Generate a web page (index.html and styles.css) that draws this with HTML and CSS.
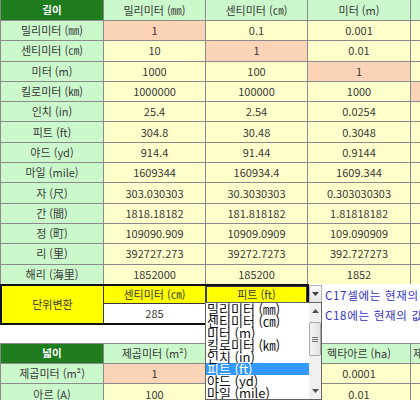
FILE: index.html
```html
<!DOCTYPE html>
<html lang="ko">
<head>
<meta charset="utf-8">
<title>단위변환</title>
<link rel="stylesheet" href="styles.css">
</head>
<body>
<div class="sheet">
  <div class="grid length">
    <div class="c h0">길이</div>
    <div class="c h k">밀리미터 (㎜)</div>
    <div class="c h k">센티미터 (㎝)</div>
    <div class="c h k">미터 (m)</div>
    <div class="c h k">킬로미터 (㎞)</div>

    <div class="c lb k">밀리미터 (㎜)</div><div class="c d">1</div><div class="c v">0.1</div><div class="c v">0.001</div><div class="c v">0.000001</div>
    <div class="c lb k">센티미터 (㎝)</div><div class="c v">10</div><div class="c d">1</div><div class="c v">0.01</div><div class="c v">0.00001</div>
    <div class="c lb k">미터 (m)</div><div class="c v">1000</div><div class="c v">100</div><div class="c d">1</div><div class="c v">0.001</div>
    <div class="c lb k">킬로미터 (㎞)</div><div class="c v">1000000</div><div class="c v">100000</div><div class="c v">1000</div><div class="c d">1</div>
    <div class="c lb k">인치 (in)</div><div class="c v">25.4</div><div class="c v">2.54</div><div class="c v">0.0254</div><div class="c v">0.0000254</div>
    <div class="c lb k">피트 (ft)</div><div class="c v">304.8</div><div class="c v">30.48</div><div class="c v">0.3048</div><div class="c v">0.0003048</div>
    <div class="c lb k">야드 (yd)</div><div class="c v">914.4</div><div class="c v">91.44</div><div class="c v">0.9144</div><div class="c v">0.0009144</div>
    <div class="c lb k">마일 (mile)</div><div class="c v">1609344</div><div class="c v">160934.4</div><div class="c v">1609.344</div><div class="c v">1.609344</div>
    <div class="c lb k">자 (尺)</div><div class="c v">303.030303</div><div class="c v">30.3030303</div><div class="c v">0.303030303</div><div class="c v">0.000303</div>
    <div class="c lb k">간 (間)</div><div class="c v">1818.18182</div><div class="c v">181.818182</div><div class="c v">1.81818182</div><div class="c v">0.001818</div>
    <div class="c lb k">정 (町)</div><div class="c v">109090.909</div><div class="c v">10909.0909</div><div class="c v">109.090909</div><div class="c v">0.109091</div>
    <div class="c lb k">리 (里)</div><div class="c v">392727.273</div><div class="c v">39272.7273</div><div class="c v">392.727273</div><div class="c v">0.392727</div>
    <div class="c lb k">해리 (海里)</div><div class="c v">1852000</div><div class="c v">185200</div><div class="c v">1852</div><div class="c v">1.852</div>
  </div>

  <div class="convert">
    <div class="conv">
      <div class="c yel k conv-label">단위변환</div>
      <div class="c yel k">센티미터 (㎝)</div>
      <div class="c yel k sel">피트 (ft)</div>
      <div class="c wht">285</div>
      <div class="c wht"></div>
    </div>
    <div class="notes">
      <p>C17셀에는 현재의 단위를 선택하세요</p>
      <p>C18에는 현재의 값을 입력하세요</p>
    </div>
  </div>

  <div class="grid area">
    <div class="c h0">넓이</div>
    <div class="c h k">제곱미터 (m²)</div>
    <div class="c h k">아르 (A)</div>
    <div class="c h k">헥타아르 (ha)</div>
    <div class="c h k">제곱킬로미터 (㎢)</div>

    <div class="c lb k">제곱미터 (m²)</div><div class="c d">1</div><div class="c v">0.01</div><div class="c v">0.0001</div><div class="c v">0.000001</div>
    <div class="c lb k">아르 (A)</div><div class="c v">100</div><div class="c d">1</div><div class="c v">0.01</div><div class="c v">0.0001</div>
  </div>

  <div class="dd-btn">
    <svg width="7" height="4" viewBox="0 0 7 4"><polygon points="0,0 7,0 3.5,4" fill="#404040"/></svg>
  </div>

  <div class="dd-list">
    <ul class="items">
      <li>밀리미터 (㎜)</li>
      <li>센티미터 (㎝)</li>
      <li>미터 (m)</li>
      <li>킬로미터 (㎞)</li>
      <li>인치 (in)</li>
      <li class="on">피트 (ft)</li>
      <li>야드 (yd)</li>
      <li>마일 (mile)</li>
    </ul>
    <div class="sbar">
      <div class="sb-btn"><svg width="7" height="4" viewBox="0 0 7 4"><polygon points="0,4 7,4 3.5,0" fill="#505050"/></svg></div>
      <div class="thumb"><svg width="6" height="5" viewBox="0 0 6 5"><path d="M0 0.5H6M0 2.5H6M0 4.5H6" stroke="#777" stroke-width="1"/></svg></div>
      <div class="sb-fill"></div>
      <div class="sb-btn"><svg width="7" height="4" viewBox="0 0 7 4"><polygon points="0,0 7,0 3.5,4" fill="#505050"/></svg></div>
    </div>
  </div>
</div>
</body>
</html>
```

FILE: styles.css
```css
* {
  box-sizing: border-box;
  margin: 0;
  padding: 0;
}

html, body {
  background: #ffffff;
}

body {
  margin: 0;
  width: 420px;
  height: 400px;
  overflow: hidden;
  font-family: "Noto Sans CJK KR", "Noto Sans", sans-serif;
  color: #383838;
}

.sheet {
  position: relative;
  width: 520px;
}

.grid {
  display: grid;
  grid-template-columns: 102px 101px 101px 102px 86px;
  gap: 1px;
  background: #8a8a8a;
  padding-left: 1px;
  width: max-content;
}

.length {
  grid-template-rows: 20px repeat(13, 19.3px);
}

.area {
  margin-top: 18px;
  padding-top: 1px;
  grid-template-rows: repeat(3, 19.3px);
}

.c {
  display: flex;
  align-items: center;
  justify-content: center;
  font-size: 11px;
  line-height: 1;
  white-space: nowrap;
  overflow: hidden;
}

.k {
  font-size: 11px;
}

.h0 {
  background: #1f7d1f;
  color: #ffffff;
  font-weight: bold;
  font-size: 10.5px;
}

.h,
.lb {
  background: #ccf9cc;
}

.v {
  background: #ffffcc;
}

.d {
  background: #fbd3b6;
}

/* conversion block */
.convert {
  display: flex;
  align-items: flex-start;
}

.conv {
  display: grid;
  grid-template-columns: 101px 101px 101px;
  grid-template-rows: 17px 19px;
  gap: 1px;
  background: #3a3a3a;
  border: 2px solid #111111;
}

.conv-label {
  grid-row: span 2;
}

.yel {
  background: #ffff00;
}

.wht {
  background: #ffffff;
}

.sel {
  box-shadow: inset 0 0 0 1px #3a3a4a;
}

.notes {
  margin-left: 16px;
  padding-top: 1px;
  font-size: 11.5px;
  letter-spacing: 0.7px;
  line-height: 20px;
  color: #3434c4;
  white-space: nowrap;
}

/* dropdown overlay */
.dd-btn {
  position: absolute;
  left: 309px;
  top: 285px;
  width: 13px;
  height: 18px;
  background: linear-gradient(#fafafa, #e4e4e4);
  border: 1px solid #b4b4b4;
  display: flex;
  align-items: center;
  justify-content: center;
}

.dd-list {
  position: absolute;
  left: 205px;
  top: 302px;
  width: 117px;
  height: 98px;
  background: #ffffff;
  border: 1px solid #646464;
  display: flex;
  overflow: hidden;
}

.items {
  list-style: none;
  flex: 1;
}

.items li {
  height: 12px;
  line-height: 12px;
  font-size: 13px;
  color: #111111;
  padding-left: 1px;
  white-space: nowrap;
}

.items li.on {
  background: #3399ff;
  color: #ffffff;
}

.sbar {
  width: 12px;
  background: #f0f0f0;
  display: flex;
  flex-direction: column;
}

.sb-btn {
  height: 16px;
  display: flex;
  align-items: center;
  justify-content: center;
}

.thumb {
  margin-top: 3px;
  height: 34px;
  background: linear-gradient(90deg, #f4f4f4, #e2e2e2);
  border: 1px solid #a8a8a8;
  border-radius: 2px;
  display: flex;
  align-items: center;
  justify-content: center;
}

.sb-fill {
  flex: 1;
}
```
